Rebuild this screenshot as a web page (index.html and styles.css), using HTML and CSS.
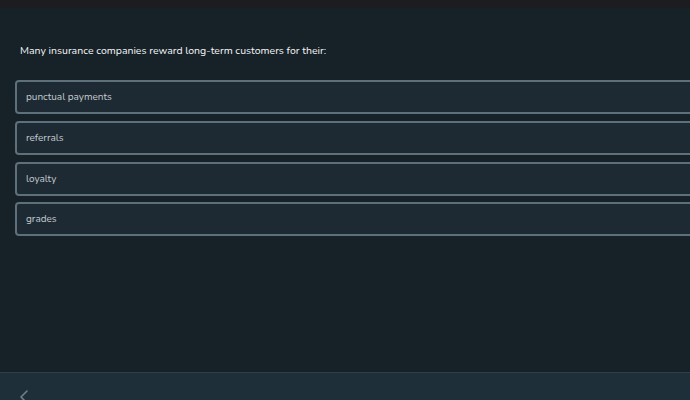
FILE: index.html
```html
<!DOCTYPE html>
<html lang="en">
<head>
  <meta charset="UTF-8" />
  <meta name="viewport" content="width=device-width, initial-scale=1.0"/>
  <title>Quiz</title>
  <link rel="stylesheet" href="styles.css">
</head>
<body>
  <div class="topbar"></div>

  <main class="quiz">
    <p class="question">Many insurance companies reward long-term customers for their:</p>

    <ul class="options">
      <li class="option">punctual payments</li>
      <li class="option">referrals</li>
      <li class="option">loyalty</li>
      <li class="option">grades</li>
    </ul>
  </main>

  <footer class="navbar">
    <button class="back" aria-label="Back">
      <svg width="16" height="16" viewBox="0 0 16 16">
        <path d="M11 2 L5 8 L11 14" fill="none" stroke="#6b808b" stroke-width="1.6" stroke-linecap="round" stroke-linejoin="round"/>
      </svg>
    </button>
  </footer>
</body>
</html>
```

FILE: styles.css
```css
html, body { height: 100%; }
body {
  margin: 0;
  font-family: "Nunito", "Lato", sans-serif;
  background-color: #172128;
  color: #f1f1f1;
  display: flex;
  flex-direction: column;
  overflow: hidden;
}
.topbar { height: 8px; background-color: #1c1d21; flex-shrink: 0; }
.quiz { flex: 1; padding: 35px 0 0 15px; }
.question {
  margin: 0 0 21px 5px;
  font-size: 10.5px;
  line-height: 16px;
  color: #f4f6f7;
}
.options {
  list-style: none;
  margin: 0 -20px 0 0;
  padding: 0;
  display: flex;
  flex-direction: column;
  gap: 6.8px;
}
.option {
  height: 30px;
  display: flex;
  align-items: center;
  padding-left: 9px;
  background-color: #1e2a33;
  border: 2px solid #5e707a;
  border-radius: 4px;
  font-size: 10px;
  color: #c3cbcf;
}
.navbar {
  height: 27px;
  flex-shrink: 0;
  background-color: #1f2f3a;
  border-top: 1px solid #2f404b;
  padding-left: 16px;
}
.back {
  margin-top: 16px;
  padding: 0;
  border: none;
  background: none;
}
```
